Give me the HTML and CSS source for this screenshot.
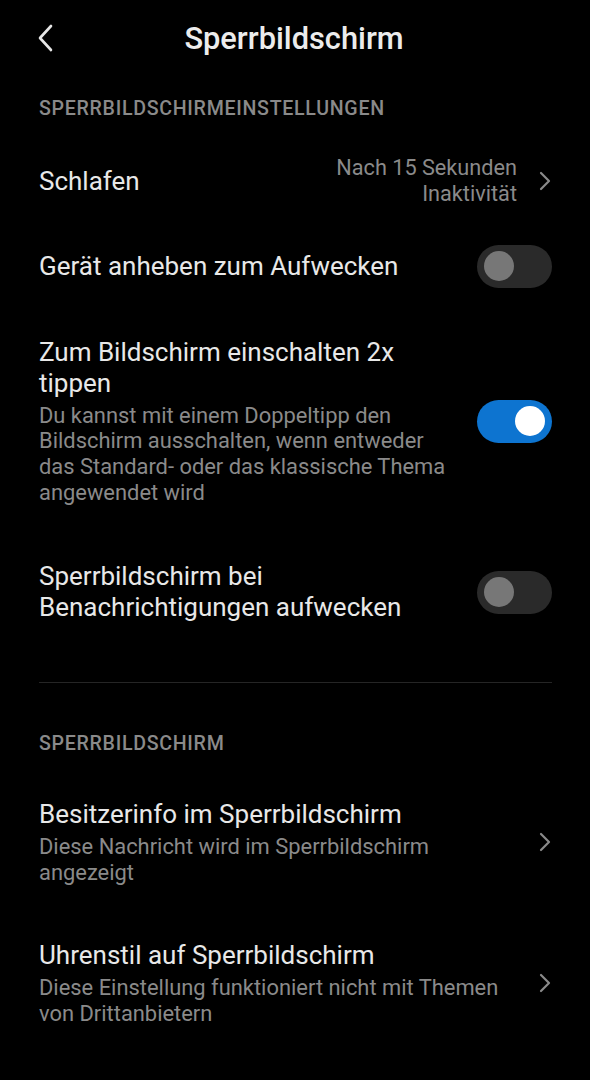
FILE: index.html
```html
<!DOCTYPE html>
<html lang="de">

<head>
    <meta charset="utf-8">
    <title>Sperrbildschirm</title>
    <link rel="stylesheet" href="styles.css">
</head>

<body>
    <div class="nav">
        <svg class="back" width="20" height="30" viewBox="0 0 20 30">
            <path d="M15 3 L4 15 L15 27" fill="none" stroke="#e6e6e6" stroke-width="2.6" stroke-linecap="round" stroke-linejoin="round" />
        </svg>
        <h1 class="nav-title">Sperrbildschirm</h1>
        <span></span>
    </div>

    <div class="section-head">SPERRBILDSCHIRMEINSTELLUNGEN</div>

    <div class="row row-sleep">
        <div class="row-text">
            <div class="row-title">Schlafen</div>
        </div>
        <div class="row-value">Nach 15 Sekunden<br>Inaktivität</div>
        <svg class="chevron" width="14" height="20" viewBox="0 0 14 20">
            <path d="M3 2 L11 10 L3 18" fill="none" stroke="#8a8a8a" stroke-width="2.2" stroke-linecap="round" stroke-linejoin="round" />
        </svg>
    </div>

    <div class="row row-lift">
        <div class="row-text">
            <div class="row-title">Gerät anheben zum Aufwecken</div>
        </div>
        <div class="switch"><div class="knob"></div></div>
    </div>

    <div class="row row-tap">
        <div class="row-text">
            <div class="row-title">Zum Bildschirm einschalten 2x tippen</div>
            <div class="row-desc">Du kannst mit einem Doppeltipp den Bildschirm ausschalten, wenn entweder das Standard- oder das klassische Thema angewendet wird</div>
        </div>
        <div class="switch on"><div class="knob"></div></div>
    </div>

    <div class="row row-notify">
        <div class="row-text">
            <div class="row-title">Sperrbildschirm bei Benachrichtigungen aufwecken</div>
        </div>
        <div class="switch"><div class="knob"></div></div>
    </div>

    <div class="divider"></div>

    <div class="section-head">SPERRBILDSCHIRM</div>

    <div class="row row-owner link">
        <div class="row-text">
            <div class="row-title">Besitzerinfo im Sperrbildschirm</div>
            <div class="row-desc">Diese Nachricht wird im Sperrbildschirm angezeigt</div>
        </div>
        <svg class="chevron" width="14" height="20" viewBox="0 0 14 20">
            <path d="M3 2 L11 10 L3 18" fill="none" stroke="#8a8a8a" stroke-width="2.2" stroke-linecap="round" stroke-linejoin="round" />
        </svg>
    </div>

    <div class="row row-clock link">
        <div class="row-text">
            <div class="row-title">Uhrenstil auf Sperrbildschirm</div>
            <div class="row-desc">Diese Einstellung funktioniert nicht mit Themen von Drittanbietern</div>
        </div>
        <svg class="chevron" width="14" height="20" viewBox="0 0 14 20">
            <path d="M3 2 L11 10 L3 18" fill="none" stroke="#8a8a8a" stroke-width="2.2" stroke-linecap="round" stroke-linejoin="round" />
        </svg>
    </div>
</body>

</html>
```

FILE: styles.css
```css
body {
    background-color: #000;
    color: #e8e8e8;
    font-family: Roboto, "Liberation Sans", sans-serif;
    margin: 0;
    width: 590px;
    height: 1080px;
    overflow: hidden;
}

.nav {
    display: grid;
    grid-template-columns: 1fr auto 1fr;
    align-items: center;
    height: 76px;
    padding: 0 38px 0 36px;
}

.back {
    display: block;
}

.nav-title {
    margin: 0;
    font-size: 30.8px;
    font-weight: 500;
    color: #ececec;
}

.section-head {
    display: flex;
    align-items: center;
    height: 64px;
    padding: 0 39px;
    font-size: 19.6px;
    font-weight: 500;
    letter-spacing: 0.7px;
    color: #8a8a8a;
}

.row {
    display: flex;
    align-items: center;
    padding: 0 38px 0 39px;
}

.row-text {
    width: 415px;
}

.link .row-text {
    width: 470px;
}

.row-title {
    font-size: 26px;
    line-height: 31px;
}

.row-desc {
    margin-top: 4px;
    font-size: 21.9px;
    line-height: 25.7px;
    color: #8a8a8a;
}

.row-sleep {
    height: 82px;
}

.row-sleep .row-text {
    width: auto;
    flex: 1;
}

.row-value {
    text-align: right;
    font-size: 21.7px;
    line-height: 26px;
    color: #8a8a8a;
    margin-right: 21px;
}

.row-lift {
    height: 88px;
}

.row-tap {
    height: 222px;
}

.row-notify {
    height: 120px;
}

.row-owner {
    height: 134px;
}

.row-clock {
    height: 148px;
}

.chevron {
    display: block;
    margin-left: auto;
}

.divider {
    height: 1px;
    margin: 30px 38px 28px 39px;
    background-color: #252525;
}

.switch {
    margin-left: auto;
    width: 75px;
    height: 43px;
    border-radius: 22px;
    background-color: #2a2a2a;
    display: flex;
    align-items: center;
    padding: 0 7px;
    box-sizing: border-box;
}

.knob {
    width: 30px;
    height: 30px;
    border-radius: 50%;
    background-color: #777;
}

.switch.on {
    background-color: #0d74d0;
    justify-content: flex-end;
}

.switch.on .knob {
    background-color: #fff;
}
```
